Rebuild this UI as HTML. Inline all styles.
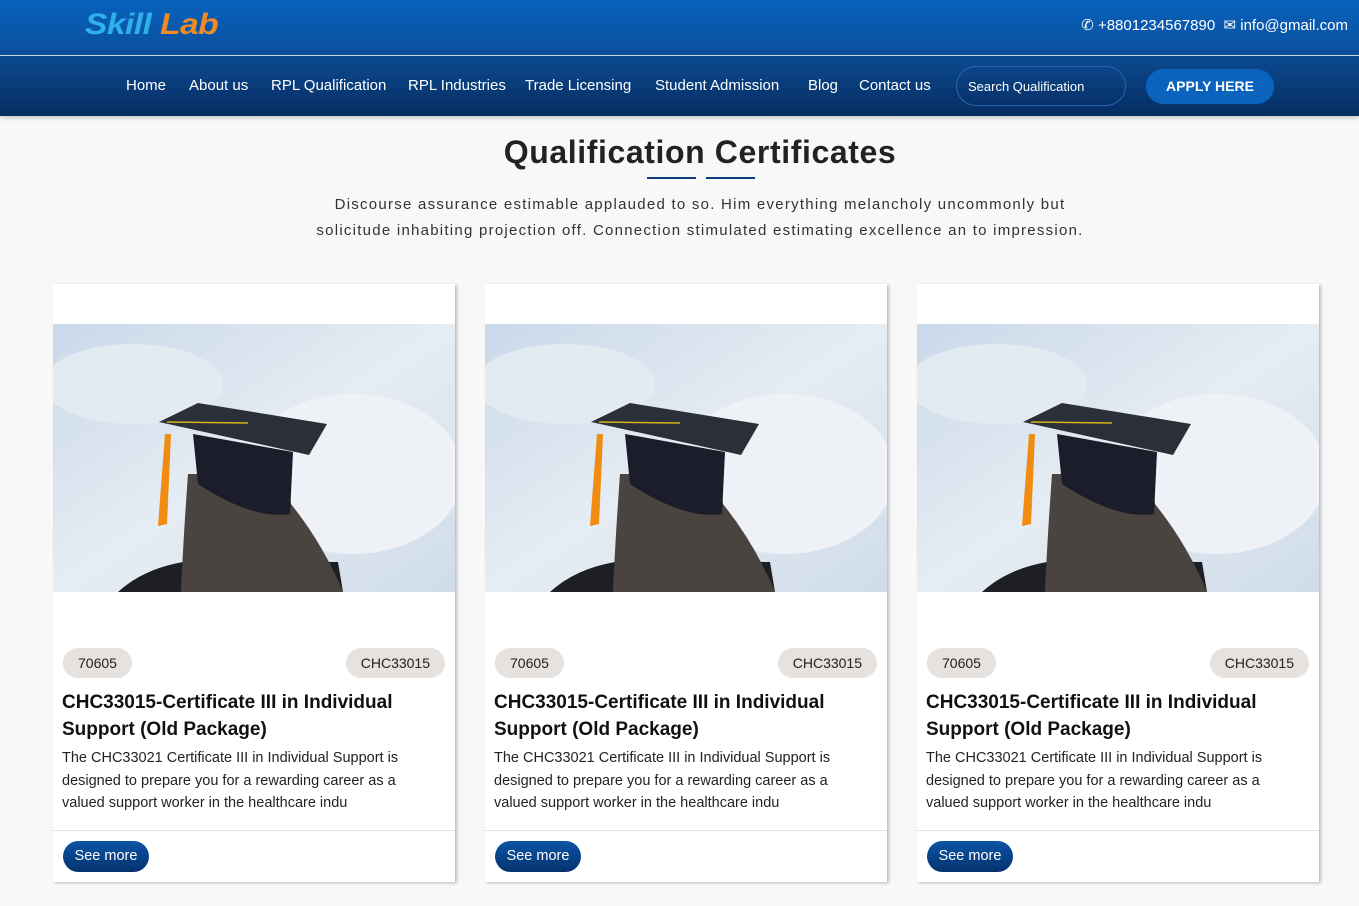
<!DOCTYPE html>
<html><head><meta charset="utf-8"><style>
*{margin:0;padding:0;box-sizing:border-box}
body{width:1359px;height:906px;overflow:hidden;background:#f8f8f8;font-family:"Liberation Sans",sans-serif;position:relative}
.top{position:absolute;left:0;top:0;width:1359px;height:55px;background:linear-gradient(#0862bd,#0a4f9c)}
.line{position:absolute;top:55px;left:0;width:1359px;height:1px;background:#cfdcec}
.nav{position:absolute;top:56px;left:0;width:1359px;height:60px;background:linear-gradient(#0b4a90,#062d62);box-shadow:0 2px 4px rgba(0,0,0,.2)}
.logo{position:absolute;left:85px;top:8px;font-size:30px;font-weight:900;font-style:italic;letter-spacing:-0.5px;transform:scaleX(1.12);transform-origin:left}
.contact{position:absolute;right:11px;top:16px;color:#fff;font-size:15px}
.nav a{position:absolute;top:21px;color:#fff;font-size:15px;text-decoration:none}
.search{position:absolute;left:956px;top:10px;width:170px;height:40px;border:1px solid #2a66ad;border-radius:20px;color:#fff;font-size:13px;padding:12px 0 0 11px}
.apply{position:absolute;left:1146px;top:13px;width:128px;height:35px;border-radius:18px;background:#0a63bc;color:#fff;font-weight:bold;font-size:14px;text-align:center;line-height:35px}
h1{position:absolute;top:134px;left:0;width:1400px;text-align:center;font-size:32px;color:#222;font-weight:bold;letter-spacing:.6px}
.ul{position:absolute;top:177px;height:2px;background:#0b3d7a;width:49px}
.desc{position:absolute;top:192px;left:250px;width:900px;text-align:center;font-size:15px;line-height:26px;color:#333;letter-spacing:1.25px}
.card{position:absolute;top:284px;width:402px;height:598px;background:#fff;box-shadow:2px 1px 3px rgba(0,0,0,.25)}
.card svg{position:absolute;top:40px;left:0}
.pill{position:absolute;top:364px;height:30px;border-radius:15px;background:#e5e2e0;font-size:14px;line-height:30px;padding:0 15px;color:#222}
.ct{position:absolute;top:405px;left:9px;width:385px;font-size:19px;font-weight:bold;line-height:27px;color:#111}
.cd{position:absolute;top:463px;left:9px;width:375px;font-size:14.5px;line-height:22.5px;color:#222}
.hr{position:absolute;top:546px;left:0;width:402px;height:1px;background:#e2e2e2}
.btn{position:absolute;top:557px;left:10px;width:86px;height:31px;border-radius:16px;background:linear-gradient(#0a54a6,#06336e);color:#fff;font-size:14.5px;line-height:31px;text-align:center}
</style></head><body>
<div class="top"><div class="logo"><span style="color:#2fb0e8">Skill</span> <span style="color:#f08a24">Lab</span></div>
<div class="contact">&#9990; +8801234567890 &nbsp;&#9993; info@gmail.com</div></div>
<div class="line"></div>
<div class="nav">
<a style="left:126px">Home</a><a style="left:189px">About us</a><a style="left:271px">RPL Qualification</a><a style="left:408px">RPL Industries</a><a style="left:525px">Trade Licensing</a><a style="left:655px">Student Admission</a><a style="left:808px">Blog</a><a style="left:859px">Contact us</a>
<div class="search">Search Qualification</div><div class="apply">APPLY HERE</div></div>
<h1>Qualification Certificates</h1>
<div class="ul" style="left:647px"></div><div class="ul" style="left:706px"></div>
<div class="desc">Discourse assurance estimable applauded to so. Him everything melancholy uncommonly but<br>solicitude inhabiting projection off. Connection stimulated estimating excellence an to impression.</div>

<div class="card" style="left:53px">
<svg width="402" height="268" viewBox="0 0 402 268"><defs><linearGradient id="s" x1="0" y1="0" x2="1" y2="1"><stop offset="0" stop-color="#c9d9ea"/><stop offset=".5" stop-color="#e6ecf3"/><stop offset="1" stop-color="#cfdcea"/></linearGradient></defs>
<rect width="402" height="268" fill="url(#s)"/><ellipse cx="300" cy="150" rx="110" ry="80" fill="#eef1f5"/><ellipse cx="80" cy="60" rx="90" ry="40" fill="#e4eaf1"/>
<path d="M65 268 Q90 245 130 238 L285 238 L290 268Z" fill="#1e1f24"/>
<path d="M135 150 Q130 220 128 268 L290 268 Q270 220 238 180 L235 150Z" fill="#4a4440"/>
<path d="M140 110 L240 128 L237 190 Q200 196 145 160Z" fill="#1c1d2a"/>
<path d="M106 98 L145 79 L274 100 L256 131Z" fill="#2b2f38"/>
<path d="M114 98 L195 99" stroke="#d9b21e" stroke-width="1.5"/>
<path d="M112 110 L118 110 L114 200 L105 202Z" fill="#f08c10"/>
</svg>
<div class="pill" style="left:10px">70605</div><div class="pill" style="right:10px">CHC33015</div>
<div class="ct">CHC33015-Certificate III in Individual Support (Old Package)</div>
<div class="cd">The CHC33021 Certificate III in Individual Support is designed to prepare you for a rewarding career as a valued support worker in the healthcare indu</div>
<div class="hr"></div><div class="btn">See more</div></div>

<div class="card" style="left:485px">
<svg width="402" height="268" viewBox="0 0 402 268"><rect width="402" height="268" fill="url(#s)"/><ellipse cx="300" cy="150" rx="110" ry="80" fill="#eef1f5"/><ellipse cx="80" cy="60" rx="90" ry="40" fill="#e4eaf1"/>
<path d="M65 268 Q90 245 130 238 L285 238 L290 268Z" fill="#1e1f24"/>
<path d="M135 150 Q130 220 128 268 L290 268 Q270 220 238 180 L235 150Z" fill="#4a4440"/>
<path d="M140 110 L240 128 L237 190 Q200 196 145 160Z" fill="#1c1d2a"/>
<path d="M106 98 L145 79 L274 100 L256 131Z" fill="#2b2f38"/>
<path d="M114 98 L195 99" stroke="#d9b21e" stroke-width="1.5"/>
<path d="M112 110 L118 110 L114 200 L105 202Z" fill="#f08c10"/></svg>
<div class="pill" style="left:10px">70605</div><div class="pill" style="right:10px">CHC33015</div>
<div class="ct">CHC33015-Certificate III in Individual Support (Old Package)</div>
<div class="cd">The CHC33021 Certificate III in Individual Support is designed to prepare you for a rewarding career as a valued support worker in the healthcare indu</div>
<div class="hr"></div><div class="btn">See more</div></div>

<div class="card" style="left:917px">
<svg width="402" height="268" viewBox="0 0 402 268"><rect width="402" height="268" fill="url(#s)"/><ellipse cx="300" cy="150" rx="110" ry="80" fill="#eef1f5"/><ellipse cx="80" cy="60" rx="90" ry="40" fill="#e4eaf1"/>
<path d="M65 268 Q90 245 130 238 L285 238 L290 268Z" fill="#1e1f24"/>
<path d="M135 150 Q130 220 128 268 L290 268 Q270 220 238 180 L235 150Z" fill="#4a4440"/>
<path d="M140 110 L240 128 L237 190 Q200 196 145 160Z" fill="#1c1d2a"/>
<path d="M106 98 L145 79 L274 100 L256 131Z" fill="#2b2f38"/>
<path d="M114 98 L195 99" stroke="#d9b21e" stroke-width="1.5"/>
<path d="M112 110 L118 110 L114 200 L105 202Z" fill="#f08c10"/></svg>
<div class="pill" style="left:10px">70605</div><div class="pill" style="right:10px">CHC33015</div>
<div class="ct">CHC33015-Certificate III in Individual Support (Old Package)</div>
<div class="cd">The CHC33021 Certificate III in Individual Support is designed to prepare you for a rewarding career as a valued support worker in the healthcare indu</div>
<div class="hr"></div><div class="btn">See more</div></div>
</body></html>
